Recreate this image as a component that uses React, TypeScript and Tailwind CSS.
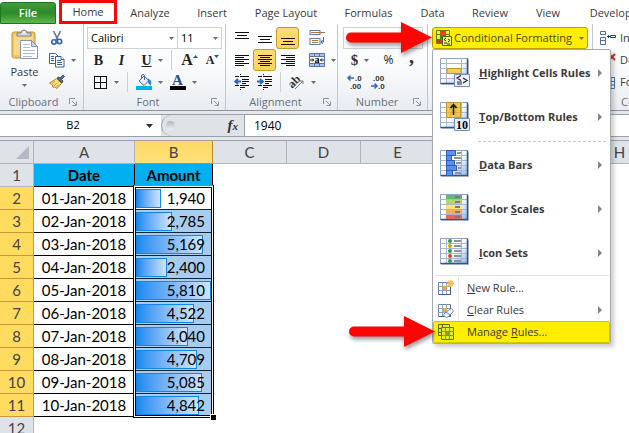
import type { FC, ReactNode } from "react";
import { clsx } from "clsx";

const tabs = [
  { label: "Analyze", width: "w-[66px]" },
  { label: "Insert", width: "w-[58px]" },
  { label: "Page Layout", width: "w-[90px]" },
  { label: "Formulas", width: "w-[75px]" },
  { label: "Data", width: "w-[53px]" },
  { label: "Review", width: "w-[62px]" },
  { label: "View", width: "w-[54px]" },
  { label: "Developer", width: "w-[82px]" },
];

const rows = [
  { date: "01-Jan-2018", amount: 1940 },
  { date: "02-Jan-2018", amount: 2785 },
  { date: "03-Jan-2018", amount: 5169 },
  { date: "04-Jan-2018", amount: 2400 },
  { date: "05-Jan-2018", amount: 5810 },
  { date: "06-Jan-2018", amount: 4522 },
  { date: "07-Jan-2018", amount: 4040 },
  { date: "08-Jan-2018", amount: 4709 },
  { date: "09-Jan-2018", amount: 5085 },
  { date: "10-Jan-2018", amount: 4842 },
];

const maxAmount = Math.max(...rows.map((row) => row.amount));
const emptyColumns = ["C", "D", "E", "F", "G", "H"];

/* ---------- small glyphs ---------- */

const Caret: FC<{ className?: string }> = ({ className }) => (
  <svg
    className={clsx("h-[3px] w-[5px] shrink-0", className)}
    viewBox="0 0 5 3"
    fill="#6b6b6b"
  >
    <path d="M0 0h5L2.500 3z" />
  </svg>
);

const Launcher = () => (
  <button aria-label="More options" className="absolute right-1.5 bottom-1">
    <svg className="h-[8px] w-[8px]" viewBox="0 0 8 8" fill="none" stroke="#8d939c">
      <path d="M.5 6V.5H6M3 3l4 4M7.500 3.500v4h-4" />
    </svg>
  </button>
);

const Lines: FC<{ d: string }> = ({ d }) => (
  <svg
    className="h-4 w-4 shrink-0"
    viewBox="0 0 16 16"
    stroke="#111"
    fill="none"
    shapeRendering="crispEdges"
  >
    <path d={d} />
  </svg>
);

const PasteIcon = () => (
  <svg className="h-[31px] w-[28px] shrink-0" viewBox="0 0 28 31">
    <rect x="1" y="3" width="23" height="26" rx="2" fill="#f3c567" stroke="#c89436" />
    <rect x="3" y="6" width="19" height="20" fill="#f8d88d" />
    <path
      d="M6 6V4h4a3 3 0 0 1 6 0h4v3H6z"
      fill="#d7dbe2"
      stroke="#747c88"
    />
    <circle cx="13" cy="3.500" r="1" fill="#fff" />
    <path d="M9.500 11.500h11l6 6v12h-17z" fill="#fff" stroke="#8494b4" />
    <path d="M20.500 11.500v6h6z" fill="#c6d6ef" stroke="#8494b4" />
    <path
      d="M12 15.500h7M12 18.500h7M12 21.500h12M12 24.500h12M12 27.500h9"
      stroke="#a9b9d6"
    />
  </svg>
);

const CutIcon = () => (
  <svg className="h-4 w-4 shrink-0" viewBox="0 0 16 16" fill="none">
    <path d="M4.500 1l4.500 9M11.500 1L7 10" stroke="#64748f" strokeWidth="1.600" />
    <circle cx="5" cy="12" r="2.200" stroke="#2c5fb3" strokeWidth="1.600" />
    <circle cx="10.500" cy="11.500" r="2.200" stroke="#2c5fb3" strokeWidth="1.600" />
  </svg>
);

const CopyIcon = () => (
  <svg className="h-4 w-4 shrink-0" viewBox="0 0 16 16" stroke="#3a62a8" fill="#fff">
    <path d="M.5 1.500h6l3 3v7h-9z" />
    <path d="M2 4.500h3M2 6.500h3M2 8.500h3" />
    <path d="M6.500 4.500h5.500l3 3v7.500H6.500z" />
    <path d="M12 4.500v3h3M8 8.500h4M8 10.500h5M8 12.500h5" />
  </svg>
);

const PainterIcon = () => (
  <svg className="h-4 w-4 shrink-0" viewBox="0 0 16 16">
    <path d="M11 4l3-3 1.500 1.500-3 3z" fill="#5577b8" stroke="#3a5690" />
    <path d="M8 4l2-1 4 4-1 2z" fill="#6a6f7a" stroke="#454a55" />
    <path
      d="M7.500 4.500l5 5L8 14.500 5.500 13 4 13.500 3.500 11 .5 9z"
      fill="#f8dc79"
      stroke="#ad8a3a"
    />
    <path d="M6 7l-3 2.500M8 9l-3 3M10 10.500l-3 3" stroke="#c9a13f" />
  </svg>
);

const FillIcon = () => (
  <svg className="h-4 w-4 shrink-0" viewBox="0 0 16 16">
    <path d="M3 7l5-5 5 4.500-5 5z" fill="#e3ebf7" stroke="#48658f" />
    <path d="M5.500 5V2a1.500 1.500 0 0 1 3 0v4" fill="none" stroke="#48658f" />
    <path d="M12 5c3 1 3 3 2.500 6-2-1-2-3-2.500-6z" fill="#3579d0" stroke="#3579d0" />
    <rect y="12" width="16" height="4" fill="#00b0f0" />
  </svg>
);

const WrapIcon = () => (
  <svg className="h-4 w-4 shrink-0" viewBox="0 0 16 16" fill="none">
    <rect x="1" y=".5" width="10" height="4" fill="#fff" stroke="#5d7bad" />
    <rect x="1" y="8.500" width="10" height="6" fill="#fff" stroke="#5d7bad" />
    <path d="M2 2.500h14" stroke="#b0723a" />
    <path d="M3 10.500h6M3 12.500h6" stroke="#b0723a" />
    <path d="M14.500 7v5H12M13.500 10L12 12l1.500 2" stroke="#3264b5" />
  </svg>
);

const MergeIcon = () => (
  <svg className="h-4 w-4 shrink-0" viewBox="0 0 16 16">
    <path d="M.5 1.500h15v13H.5z" fill="#a9c5ee" stroke="#5575a8" />
    <path d="M5.500 1.500v3M10.500 1.500v3M5.500 11.500v3M10.500 11.500v3" stroke="#5575a8" />
    <path d="M.5 4.500h15v7H.5z" fill="#fff" stroke="#5575a8" />
    <path d="M1 8h4M11 8h4M3 6.500L4.500 8 3 9.500M13 6.500L11.500 8l1.500 1.500" fill="none" stroke="#222" />
    <text x="5.500" y="11" fontSize="10" fontWeight="700" fontFamily="Liberation Serif">
      a
    </text>
  </svg>
);

const IndentIcon: FC<{ right?: boolean }> = ({ right }) => (
  <svg className="h-4 w-4 shrink-0" viewBox="0 0 16 16" fill="none">
    <path
      d="M1 2.500h4M7 2.500h8M8 5.500h7M8 7.500h7M8 9.500h4M1 11.500h4M7 11.500h8M7 13.500h4"
      stroke="#111"
      strokeWidth="1.300"
      shapeRendering="crispEdges"
    />
    <path d="M6.500 0v4M6.500 11v5" stroke="#111" strokeDasharray="1 1" />
    <path
      d={right ? "M0 7.500h5M3 5l3 2.500L3 10" : "M1 7.500h6M4 5L1 7.500 4 10"}
      stroke="#2f66bd"
      strokeWidth="1.800"
    />
  </svg>
);

const OrientIcon = () => (
  <svg className="h-4 w-4 shrink-0" viewBox="0 0 16 16">
    <text
      x="0"
      y="11"
      fontSize="12"
      fontWeight="700"
      fontFamily="Liberation Serif"
      transform="rotate(-45 6 9)"
      fill="#333"
    >
      ab
    </text>
    <path d="M6 15l8-8M11 7h3v3" stroke="#777" fill="none" />
  </svg>
);

const DecimalIcon: FC<{ more?: boolean }> = ({ more }) => (
  <svg
    className="h-4 w-4 shrink-0"
    viewBox="0 0 16 16"
    fontSize="8"
    fontWeight="700"
    fontFamily="Liberation Sans"
    fill="#333"
  >
    <text x={more ? 8 : 3} y="7">
      {more ? ".0" : ".00"}
    </text>
    <text x={more ? 3 : 8} y="15">
      {more ? ".00" : ".0"}
    </text>
    <path
      d={more ? "M1 4h6M3.500 1.500L1 4l2.500 2.500" : "M1 12h6M4.500 9.500L7 12l-2.500 2.500"}
      stroke="#2f66bd"
      strokeWidth="1.500"
      fill="none"
    />
  </svg>
);

const ConditionalIcon = () => (
  <svg className="h-4 w-4 shrink-0" viewBox="0 0 16 16">
    <path d="M.5.5h13v13H.5z" fill="#f3ee3d" stroke="#6d7a12" />
    <path d="M.5 4.500h13M.5 9.500h13M4.500.5v13M9.500.5v13" stroke="#6d7a12" />
    <path d="M4 1h5v4H4z" fill="#df4a16" />
    <path d="M4 5h6v4H4z" fill="#3c8c1e" />
    <path d="M1 9h6v4H1z" fill="#c9401a" />
    <path d="M6.500 6.500h9v9h-9z" fill="#eef36a" stroke="#4b6516" />
    <path
      d="M10 8L8 9.500l2 1.500M8 13h3M12 9l2 1.500-2 1.500M11 14h3"
      stroke="#25400c"
      fill="none"
    />
  </svg>
);

const CellsIcon: FC<{ kind: "insert" | "delete" | "format" }> = ({ kind }) => (
  <svg className="h-4 w-4 shrink-0" viewBox="0 0 16 16" fill="#fff" stroke="#4f6ea5">
    <path d="M.5 1.500h5v3h-5zM.5 10.500h5v4h-5zM.5 7.500h5v3h-5z" />
    {kind === "insert" && (
      <path d="M7 6.500h3M8.500 5v3M10.500 5.500h5v2h-5z" stroke="#24447c" />
    )}
    {kind === "delete" && (
      <path d="M9 2l6 6M15 2L9 8" stroke="#d8321f" strokeWidth="2" />
    )}
    {kind === "format" && (
      <path d="M6.500 3.500h8v11h-8zM6.500 7.500h8M6.500 11h8M11 3.500v11" />
    )}
  </svg>
);

/* ---------- menu icons ---------- */

const MenuGrid: FC<{ children?: ReactNode }> = ({ children }) => (
  <svg className="h-[32px] w-[32px] shrink-0" viewBox="0 0 32 32">
    <defs>
      <linearGradient id="sheet" x1="0" y1="0" x2="1" y2="1">
        <stop offset="0.500" stopColor="#fff" />
        <stop offset="1" stopColor="#8fb5ea" />
      </linearGradient>
    </defs>
    <path d="M2 3h27v25H2z" fill="#c9cdd6" />
    <path d="M.5 1.500h27v25H.5z" fill="url(#sheet)" stroke="#91a3c4" />
    <path
      d="M.5 6.500h27M.5 11.500h27M.5 16.500h27M.5 21.500h27M6.500 1.500v25M21.500 1.500v25"
      stroke="#a9b6cf"
    />
    <path d="M27.500 1.500v25H.5" fill="none" stroke="#2e5591" strokeWidth="1.500" />
    {children}
  </svg>
);

const HighlightIcon = () => (
  <MenuGrid>
    <path d="M7 11.500h14v5H7z" fill="#f3cf58" stroke="#b89632" />
    <path d="M14.500 17.500h15v12h-15z" fill="#eaf1fb" stroke="#6f8fc0" />
    <path
      d="M21 18.500L17 21l4 2.500M17 25h5M17 27h5M23 21l4 2.500-4 2.500"
      stroke="#222"
      strokeWidth="1.200"
      fill="none"
    />
  </MenuGrid>
);

const TopBottomIcon = () => (
  <MenuGrid>
    <path d="M6.500 1.500h14v15h-14z" fill="#f1c84f" stroke="#b89632" />
    <path d="M6.500 6.500h14M6.500 11.500h14M11 1.500v15M16 1.500v15" stroke="#d8ae3c" />
    <path
      d="M13.500 14V4M10.500 7l3-3.500 3 3.500"
      stroke="#111"
      strokeWidth="1.500"
      fill="none"
    />
    <path d="M14.500 17.500h15v12h-15z" fill="#eaf1fb" stroke="#6f8fc0" />
    <text x="16" y="28" fontSize="12" fontWeight="700" fontFamily="Liberation Serif">
      10
    </text>
  </MenuGrid>
);

const DataBarsIcon = () => (
  <MenuGrid>
    <path
      d="M6.500 1.500h9v5h-9zM6.500 6.500h5v5h-5zM6.500 11.500h8v5h-8zM6.500 16.500h10v5h-10zM6.500 21.500h6v5h-6z"
      fill="#5d8fec"
      stroke="#2c5cba"
    />
    <path
      d="M17 4h4M14 9h7M16 14h5M18 19h3M15 24h6"
      stroke="#8d939f"
      strokeWidth="2"
    />
  </MenuGrid>
);

const ColorScalesIcon = () => (
  <MenuGrid>
    <path d="M6 2h16v4H6z" fill="#5fb974" />
    <path d="M6 7h16v4H6z" fill="#b5d66b" />
    <path d="M6 12h16v4H6z" fill="#f8e673" />
    <path d="M6 17h16v4H6z" fill="#f7ad5c" />
    <path d="M6 22h16v4H6z" fill="#ef6257" />
    <path d="M15 4h5M15 9h5M15 14h5M15 19h5M15 24h5" stroke="#7b7b72" strokeWidth="2" />
  </MenuGrid>
);

const IconSetsIcon = () => (
  <MenuGrid>
    <path d="M14 4h7M14 9h7M14 14h7M14 19h7M14 24h7" stroke="#8d939f" strokeWidth="2" />
    <circle cx="10" cy="4" r="2" fill="#2f9a4a" />
    <circle cx="10" cy="9" r="2" fill="#c3ad00" />
    <circle cx="10" cy="14" r="2" fill="#2f9a4a" />
    <circle cx="10" cy="19" r="2" fill="#e0412c" />
    <circle cx="10" cy="24" r="2" fill="#2f9a4a" />
  </MenuGrid>
);

const RuleIcon: FC<{ kind: "new" | "clear" | "manage" }> = ({ kind }) => (
  <svg className="h-4 w-4 shrink-0" viewBox="0 0 16 16">
    {kind === "manage" ? (
      <>
        <path d="M.5.500h11v11H.5z" fill="#e3ea2a" stroke="#5c7410" />
        <path d="M.5 4.500h11M.5 8.500h11M4.500.5v11" stroke="#5c7410" />
        <path d="M3.500 3.500h12v12h-12z" fill="#e3ea2a" stroke="#5c7410" />
        <path
          d="M3.500 7.500h12M3.500 11.500h12M7.500 3.500v12M11.500 3.500v12"
          stroke="#8a9c1c"
        />
        <path d="M7 7h4v4H7z" fill="#8fa01a" />
      </>
    ) : (
      <>
        <path d="M.5 2.500h12v12H.5z" fill="#fff" stroke="#6d87b5" />
        <path
          d="M.5 6.500h12M.5 10.500h12M4.500 2.500v12M8.500 2.500v12"
          stroke="#8fa3c7"
        />
        <path d="M5 6h4v4H5z" fill="#e9a93c" />
        <path d="M12.500 3v11.500H1" fill="none" stroke="#3c5f9c" />
      </>
    )}
    {kind === "new" && (
      <path
        d="M12.500 0v7M9 3.500h7M10 1l5 5M15 1l-5 5"
        stroke="#f3c22f"
        strokeWidth="1.300"
      />
    )}
    {kind === "clear" && (
      <path
        d="M6 12l6-5c2-1 4 1 3 3l-5 5c-2 1-5-1-4-3zM8 10l4 3"
        fill="#f1f4fa"
        stroke="#6f87b2"
      />
    )}
  </svg>
);

/* ---------- ribbon ---------- */

type ToolButtonProps = {
  label: string;
  active?: boolean;
  caret?: boolean;
  className?: string;
  children: ReactNode;
};

const ToolButton: FC<Readonly<ToolButtonProps>> = (props) => {
  const { label, active, caret, className, children } = props;

  return (
    <button
      aria-label={label}
      className={clsx(
        "flex h-[22px] shrink-0 items-center justify-center",
        caret ? "gap-1.5" : "",
        active &&
          "rounded-[3px] border border-[#c29b29] bg-gradient-to-b from-[#fbdb7c] to-[#fdd35b]",
        className ?? (caret ? "w-[34px]" : "w-[23px]"),
      )}
    >
      {children}
      {caret && <Caret />}
    </button>
  );
};

const Group: FC<{ title: string; className: string; children: ReactNode }> = (
  props,
) => {
  const { title, className, children } = props;

  return (
    <section
      className={clsx(
        "relative flex shrink-0 flex-col border-r border-[#c3c7ce] pt-[3px]",
        className,
      )}
    >
      <div className="h-[66px]">{children}</div>
      <h2 className="pr-4 text-center leading-[17px] text-[#66707f]">{title}</h2>
      <Launcher />
    </section>
  );
};

const Rule = () => <span className="h-5 w-px bg-[#ccd0d6]" />;

const Ribbon = () => (
  <div className="flex h-[87px] shrink-0 overflow-hidden border-b border-[#8f959e] bg-gradient-to-b from-white via-[#fafbfc] to-[#e9ecf1]">
    <Group title="Clipboard" className="w-[84px]">
      <div className="flex">
        <button className="flex w-[49px] flex-col items-center pt-0.5 leading-4">
          <PasteIcon />
          <span className="mt-1">Paste</span>
          <Caret className="mt-1" />
        </button>
        <div>
          <ToolButton label="Cut" className="w-4">
            <CutIcon />
          </ToolButton>
          <ToolButton label="Copy" caret className="w-[27px]">
            <CopyIcon />
          </ToolButton>
          <ToolButton label="Format Painter" className="w-4">
            <PainterIcon />
          </ToolButton>
        </div>
      </div>
    </Group>

    <Group title="Font" className="w-[142px] pl-[3px]">
      <div className="flex h-[22px] text-black">
        <button
          aria-label="Font name"
          className="flex h-[22px] w-[91px] items-center justify-between border border-[#ced2d9] bg-white px-[3px]"
        >
          Calibri <Caret />
        </button>
        <button
          aria-label="Font size"
          className="flex h-[22px] w-[44px] items-center justify-between border border-l-0 border-[#ced2d9] bg-white px-[3px]"
        >
          11 <Caret />
        </button>
      </div>
      <div className="flex items-center font-['Liberation_Serif',serif] text-[14px] text-[#222]">
        <ToolButton label="Bold">
          <b>B</b>
        </ToolButton>
        <ToolButton label="Italic">
          <b className="italic">I</b>
        </ToolButton>
        <ToolButton label="Underline" caret className="w-[38px]">
          <b className="underline">U</b>
        </ToolButton>
        <Rule />
        <ToolButton label="Increase Font Size" className="ml-1.5 w-[23px]">
          <b className="text-[16px]">A</b>
          <svg className="mb-2 h-[3px] w-[5px]" viewBox="0 0 5 3" fill="#2b5797">
            <path d="M0 3h5L2.500 0z" />
          </svg>
        </ToolButton>
        <ToolButton label="Decrease Font Size">
          <b className="text-[12px]">A</b>
          <svg className="mb-2 h-[3px] w-[5px]" viewBox="0 0 5 3" fill="#2b5797">
            <path d="M0 0h5L2.500 3z" />
          </svg>
        </ToolButton>
      </div>
      <div className="flex items-center">
        <ToolButton label="Borders" caret className="w-[36px]">
          <Lines d="M2.500 2.500h12v12h-12zM8.500 2.500v12M2.500 8.500h12" />
        </ToolButton>
        <span className="ml-1 flex">
          <Rule />
        </span>
        <ToolButton label="Fill Color" caret className="ml-1 w-[34px]">
          <FillIcon />
        </ToolButton>
        <ToolButton label="Font Color" caret>
          <span className="flex w-4 flex-col items-center">
            <b className="h-3 font-['Liberation_Serif',serif] text-[15px] leading-3 text-[#2a4f8e]">
              A
            </b>
            <span className="h-1 w-4 bg-black" />
          </span>
        </ToolButton>
      </div>
    </Group>

    <Group title="Alignment" className="w-[112px] pl-1">
      <div className="flex">
        <ToolButton label="Top Align">
          <Lines d="M1 2.500h14M3 5.500h10M1 8.500h14" />
        </ToolButton>
        <ToolButton label="Middle Align">
          <Lines d="M1 6.500h14M3 9.500h10M1 12.500h14" />
        </ToolButton>
        <ToolButton label="Bottom Align" active>
          <Lines d="M1 8.500h14M3 11.500h10M1 14.500h14" />
        </ToolButton>
        <ToolButton label="Wrap Text" className="ml-1.5 w-[23px]">
          <WrapIcon />
        </ToolButton>
      </div>
      <div className="flex">
        <ToolButton label="Align Left">
          <Lines d="M1 3.500h14M1 5.500h9M1 7.500h14M1 9.500h9M1 11.500h14M1 13.500h9" />
        </ToolButton>
        <ToolButton label="Center" active>
          <Lines d="M1 3.500h14M3 5.500h10M1 7.500h14M3 9.500h10M1 11.500h14M3 13.500h10" />
        </ToolButton>
        <ToolButton label="Align Right">
          <Lines d="M1 3.500h14M6 5.500h9M1 7.500h14M6 9.500h9M1 11.500h14M6 13.500h9" />
        </ToolButton>
        <ToolButton label="Merge and Center" caret className="ml-1.5 w-[34px]">
          <MergeIcon />
        </ToolButton>
      </div>
      <div className="flex items-center">
        <ToolButton label="Decrease Indent">
          <IndentIcon />
        </ToolButton>
        <ToolButton label="Increase Indent">
          <IndentIcon right />
        </ToolButton>
        <span className="ml-1 flex">
          <Rule />
        </span>
        <ToolButton label="Orientation" caret className="ml-1 w-[34px]">
          <OrientIcon />
        </ToolButton>
      </div>
    </Group>

    <Group title="Number" className="w-[90px] pl-[5px]">
      <button
        aria-label="Number format"
        className="flex h-[22px] w-[80px] items-center justify-between border border-[#ced2d9] bg-white px-1 text-black"
      >
        Custom <Caret />
      </button>
      <div className="flex font-['Liberation_Serif',serif] text-[15px] text-[#333]">
        <ToolButton label="Accounting Format" caret>
          <b>$</b>
        </ToolButton>
        <ToolButton label="Percent Style">
          <span className="font-['Noto_Sans',sans-serif] text-[12px]">%</span>
        </ToolButton>
        <ToolButton label="Comma Style">
          <b className="pb-2 text-[20px]">,</b>
        </ToolButton>
      </div>
      <div className="flex">
        <ToolButton label="Increase Decimal">
          <DecimalIcon more />
        </ToolButton>
        <ToolButton label="Decrease Decimal">
          <DecimalIcon />
        </ToolButton>
      </div>
    </Group>

    <Group title="Styles" className="w-[165px] pl-1">
      <button
        aria-expanded="true"
        className="flex h-[22px] w-[156px] items-center rounded-[3px] border border-[#c0a000] bg-[#ffee00] pr-[3px] pl-[3px] text-[#4b4a00]"
      >
        <ConditionalIcon />
        <span className="ml-0.5 grow text-left whitespace-nowrap">
          Conditional Formatting
        </span>
        <Caret />
      </button>
    </Group>

    <Group title="Cells" className="w-[90px] pl-[7px]">
      <button className="flex h-[22px] items-center gap-1">
        <CellsIcon kind="insert" /> Insert
      </button>
      <button className="flex h-[22px] items-center gap-1">
        <CellsIcon kind="delete" /> Delete
      </button>
      <button className="flex h-[22px] items-center gap-1">
        <CellsIcon kind="format" /> Format
      </button>
    </Group>
  </div>
);

/* ---------- conditional formatting menu ---------- */

type MenuItemProps = {
  icon: ReactNode;
  large?: boolean;
  arrow?: boolean;
  selected?: boolean;
  children: ReactNode;
};

const MenuItem: FC<Readonly<MenuItemProps>> = (props) => {
  const { icon, large, arrow, selected, children } = props;

  return (
    <button
      role="menuitem"
      className={clsx(
        "flex w-full items-center pr-2 text-left whitespace-nowrap",
        large ? "h-11 pl-[7px] font-bold" : "h-[22px]",
        selected
          ? "rounded-[2px] border border-[#d8c400] bg-[#ffee00] pl-1"
          : !large && "pl-[5px]",
      )}
    >
      {icon}
      <span className={clsx("grow", large ? "pl-[7px]" : "pl-[13px]")}>{children}</span>
      {arrow && (
        <svg className="h-[8px] w-[4px] shrink-0" viewBox="0 0 4 8" fill="#858585">
          <path d="M0 0l4 4-4 4z" />
        </svg>
      )}
    </button>
  );
};

const RulesMenu = () => (
  <div
    role="menu"
    className="absolute top-[49px] left-[432px] w-[179px] rounded-[2px] border border-[#a7abb0] bg-white pt-px shadow-[3px_3px_4px_rgba(0,0,0,0.2)]"
  >
    <MenuItem large arrow icon={<HighlightIcon />}>
      <u>H</u>ighlight Cells Rules
    </MenuItem>
    <MenuItem large arrow icon={<TopBottomIcon />}>
      <u>T</u>op/Bottom Rules
    </MenuItem>
    <hr className="mt-0.5 mr-1 mb-px ml-[45px] border-dashed border-[#c5c5c5]" />
    <MenuItem large arrow icon={<DataBarsIcon />}>
      <u>D</u>ata Bars
    </MenuItem>
    <MenuItem large arrow icon={<ColorScalesIcon />}>
      Color <u>S</u>cales
    </MenuItem>
    <MenuItem large arrow icon={<IconSetsIcon />}>
      <u>I</u>con Sets
    </MenuItem>
    <hr className="mx-px mb-px border-[#e0e2e5]" />
    <div className="bg-[linear-gradient(to_right,transparent_25px,#e2e4e7_25px,#e2e4e7_26px,transparent_26px)]">
      <MenuItem icon={<RuleIcon kind="new" />}>
        <u>N</u>ew Rule...
      </MenuItem>
      <MenuItem arrow icon={<RuleIcon kind="clear" />}>
        <u>C</u>lear Rules
      </MenuItem>
      <MenuItem selected icon={<RuleIcon kind="manage" />}>
        Manage <u>R</u>ules...
      </MenuItem>
    </div>
  </div>
);

const PointerArrow: FC<{ className: string }> = ({ className }) => (
  <svg
    className={clsx(
      "absolute h-[31px] w-[86px] overflow-visible drop-shadow-[1px_3px_2px_rgba(0,0,0,0.4)]",
      className,
    )}
    viewBox="0 0 86 31"
    fill="#fb0505"
  >
    <path d="M5 10.500h50V0l31 15.500L55 31V20.500H5a5 5 0 0 1 0-10z" />
  </svg>
);

/* ---------- sheet ---------- */

const FormulaBar = () => (
  <div className="mt-[3px] flex h-[23px] shrink-0 items-center border-y border-[#9a9fa8] bg-[#dfe3e8] text-black">
    <div className="flex h-full w-[161px] shrink-0 items-center bg-white pr-2">
      <input
        aria-label="Name Box"
        defaultValue="B2"
        className="w-full min-w-0 bg-transparent text-center outline-none"
      />
      <svg className="h-1 w-[7px] shrink-0" viewBox="0 0 7 4" fill="#333">
        <path d="M0 0h7L3.500 4z" />
      </svg>
    </div>
    <div className="flex h-full w-[83px] shrink-0 items-center justify-between rounded-l-full border-l border-[#9a9fa8] pr-1.5 pl-1">
      <span className="h-[9px] w-[9px] rounded-full bg-gradient-to-b from-[#b4b8be] to-[#f0f1f3]" />
      <span className="font-['Liberation_Serif',serif] text-[15px] leading-5 font-bold text-[#333] italic">
        f<span className="text-[11px]">x</span>
      </span>
    </div>
    <input
      aria-label="Formula"
      defaultValue="1940"
      className="h-full min-w-0 grow border-l border-[#9a9fa8] bg-white pl-[9px] text-[12px] outline-none"
    />
  </div>
);

const rowHeadClass = "h-[23px] border-r border-b p-0 text-center font-normal text-[#444]";

const Sheet = () => (
  <div className="relative mt-[3px] min-h-0 grow overflow-hidden border-t border-[#9a9fa8] bg-white">
    <table className="w-[657px] table-fixed border-separate border-spacing-0 font-['Lato','Liberation_Sans',sans-serif] text-[15px] leading-[22px] text-black">
      <colgroup>
        <col className="w-[34px]" />
        <col className="w-[101px]" />
        <col className="w-[78px]" />
        {emptyColumns.map((name) => (
          <col key={name} className="w-[74px]" />
        ))}
      </colgroup>
      <thead>
        <tr className="bg-[#dfe2e7] text-[#444]">
          <th className="h-[23px] border-r border-b border-[#b1b5ba] p-0">
            <svg className="ml-auto h-[13px] w-[17px] pr-1" viewBox="0 0 13 13" fill="#b4bac3">
              <path d="M13 0v13H0z" />
            </svg>
          </th>
          <th className="border-r border-b border-[#b1b5ba] p-0 font-normal">A</th>
          <th className="border-r border-b border-[#c08c28] bg-gradient-to-b from-[#fdd964] to-[#ffe07a] p-0 font-normal">
            B
          </th>
          {emptyColumns.map((name) => (
            <th key={name} className="border-r border-b border-[#b1b5ba] p-0 font-normal">
              {name}
            </th>
          ))}
        </tr>
      </thead>
      <tbody>
        <tr>
          <th className={clsx(rowHeadClass, "border-[#b1b5ba] bg-[#dfe2e7]")}>1</th>
          <td className="border-r border-b border-black bg-[#00b0f0] p-0 text-center font-bold">
            Date
          </td>
          <td className="border-r border-b border-black bg-[#00b0f0] p-0 text-center font-bold">
            Amount
          </td>
        </tr>
        {rows.map((row, index) => (
          <tr key={row.date}>
            <th className={clsx(rowHeadClass, "border-[#c9973a] bg-[#ffdb60]")}>
              {index + 2}
            </th>
            <td className="border-r border-b border-black p-0 text-center">{row.date}</td>
            <td
              className={clsx(
                "border-r border-b border-[#0b2440] p-0 pl-px",
                index > 0 && "bg-[#a6cdf0]",
              )}
            >
              <div className="grid items-center pr-px">
                <div
                  className="col-start-1 row-start-1 h-[19px] border border-[#0f86ea] bg-gradient-to-r from-[#1189f0] to-[#cfe4fb]"
                  style={{ width: `${(row.amount / maxAmount) * 100}%` }}
                />
                <span className="col-start-1 row-start-1 pr-[6px] text-right">
                  {row.amount.toLocaleString("en-US")}
                </span>
              </div>
            </td>
          </tr>
        ))}
        <tr>
          <th className={clsx(rowHeadClass, "border-[#b1b5ba] bg-[#dfe2e7]")}>12</th>
        </tr>
      </tbody>
    </table>

    <div className="pointer-events-none absolute top-[44px] left-[133px] h-[233px] w-[81px] border border-black shadow-[inset_0_0_0_1px_white,inset_0_0_0_2px_black]">
      <span className="absolute -top-px left-0 h-px w-full bg-[#e8622a]" />
      <span className="absolute -right-[3px] -bottom-[3px] h-[6px] w-[6px] border-t border-l border-white bg-black" />
    </div>
  </div>
);

export default function App() {
  return (
    <main className="relative flex h-screen flex-col overflow-hidden bg-[#e4e7ec] font-['Open_Sans','Noto_Sans',sans-serif] text-[11px] text-[#3b3b3b]">
      <nav className="flex h-6 shrink-0 overflow-hidden bg-white">
        <button className="mt-[2px] w-[56px] shrink-0 rounded-t-[3px] border border-[#20761f] bg-gradient-to-b from-[#3f9a3a] via-[#2b8a2c] to-[#5cb947] font-semibold text-white">
          File
        </button>
        <button className="ml-[3px] w-[58px] shrink-0 border-[3px] border-[#fb0505]">
          Home
        </button>
        {tabs.map((tab) => (
          <button
            key={tab.label}
            className={clsx("shrink-0 pt-0.5 whitespace-nowrap", tab.width)}
          >
            {tab.label}
          </button>
        ))}
      </nav>
      <Ribbon />
      <FormulaBar />
      <Sheet />
      <RulesMenu />
      <PointerArrow className="top-[22px] left-[346px]" />
      <PointerArrow className="top-[316px] left-[349px]" />
    </main>
  );
}
